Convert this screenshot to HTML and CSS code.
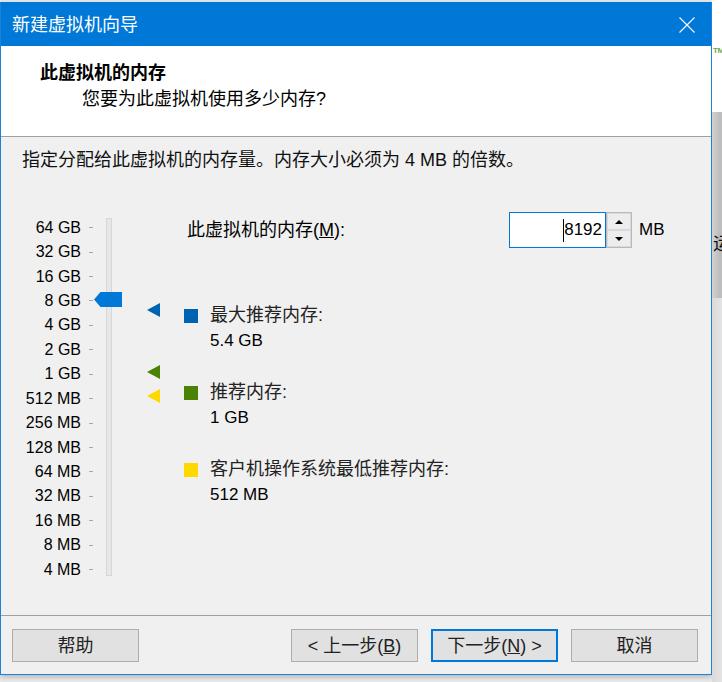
FILE: index.html
```html
<!DOCTYPE html>
<html lang="zh-CN">
<head>
<meta charset="utf-8">
<title>新建虚拟机向导</title>
<link rel="stylesheet" href="styles.css">
</head>
<body>
<div class="screen">
  <div class="window">
    <div class="titlebar">
      <span class="title">新建虚拟机向导</span>
      <svg class="close" width="16" height="16" viewBox="0 0 16 16"><path d="M0.5 0.5 L15.5 15.5 M15.5 0.5 L0.5 15.5" stroke="#fff" stroke-width="1.1" fill="none"/></svg>
    </div>
    <div class="header">
      <div class="h-title">此虚拟机的内存</div>
      <div class="h-sub">您要为此虚拟机使用多少内存?</div>
    </div>
    <div class="body">
      <div class="intro">指定分配给此虚拟机的内存量。内存大小必须为 4 MB 的倍数。</div>
      <div class="main">
        <div class="slider">
          <div class="scale">
            <div class="row"><span class="lbl">64 GB</span><span class="tick"></span></div>
            <div class="row"><span class="lbl">32 GB</span><span class="tick"></span></div>
            <div class="row"><span class="lbl">16 GB</span><span class="tick"></span></div>
            <div class="row"><span class="lbl">8 GB</span><span class="tick"></span></div>
            <div class="row"><span class="lbl">4 GB</span><span class="tick"></span></div>
            <div class="row"><span class="lbl">2 GB</span><span class="tick"></span></div>
            <div class="row"><span class="lbl">1 GB</span><span class="tick"></span></div>
            <div class="row"><span class="lbl">512 MB</span><span class="tick"></span></div>
            <div class="row"><span class="lbl">256 MB</span><span class="tick"></span></div>
            <div class="row"><span class="lbl">128 MB</span><span class="tick"></span></div>
            <div class="row"><span class="lbl">64 MB</span><span class="tick"></span></div>
            <div class="row"><span class="lbl">32 MB</span><span class="tick"></span></div>
            <div class="row"><span class="lbl">16 MB</span><span class="tick"></span></div>
            <div class="row"><span class="lbl">8 MB</span><span class="tick"></span></div>
            <div class="row"><span class="lbl">4 MB</span><span class="tick"></span></div>
          </div>
          <div class="track">
            <svg class="thumb" width="28" height="15" viewBox="0 0 28 15"><path d="M0 7.5 L6.5 0 L28 0 L28 15 L6.5 15 Z" fill="#0078d7"/></svg>
          </div>
          <div class="markers">
            <svg class="mk mk-max" width="13" height="14" viewBox="0 0 13 14"><path d="M0 7 L13 0 L13 14 Z" fill="#0063b1"/></svg>
            <svg class="mk mk-rec" width="13" height="14" viewBox="0 0 13 14"><path d="M0 7 L13 0 L13 14 Z" fill="#498205"/></svg>
            <svg class="mk mk-min" width="13" height="14" viewBox="0 0 13 14"><path d="M0 7 L13 0 L13 14 Z" fill="#ffd800"/></svg>
          </div>
        </div>
        <div class="details">
          <div class="mem-row">
            <span class="mem-label">此虚拟机的内存(<u>M</u>):</span>
            <div class="spin">
              <div class="spin-input"><span class="caret"></span>8192</div>
              <div class="spin-btns">
                <div class="sb"><span class="arr-up"></span></div>
                <div class="sb"><span class="arr-down"></span></div>
              </div>
            </div>
            <span class="unit">MB</span>
          </div>
          <div class="legend">
            <div class="item">
              <span class="sq sq-blue"></span>
              <div class="txt"><div>最大推荐内存:</div><div class="val">5.4 GB</div></div>
            </div>
            <div class="item">
              <span class="sq sq-green"></span>
              <div class="txt"><div>推荐内存:</div><div class="val">1 GB</div></div>
            </div>
            <div class="item">
              <span class="sq sq-yellow"></span>
              <div class="txt"><div>客户机操作系统最低推荐内存:</div><div class="val">512 MB</div></div>
            </div>
          </div>
        </div>
      </div>
    </div>
    <div class="footer">
      <button class="btn">帮助</button>
      <div class="spacer"></div>
      <button class="btn">&lt; 上一步(<u>B</u>)</button>
      <button class="btn btn-default">下一步(<u>N</u>) &gt;</button>
      <button class="btn">取消</button>
    </div>
  </div>
  <div class="desk">
    <div class="desk-top"><span class="tm">TM</span></div>
    <div class="desk-grey"><span class="desk-char">运</span></div>
    <div class="desk-rest"></div>
  </div>
</div>
</body>
</html>
```

FILE: styles.css
```css
* { box-sizing: border-box; }
html, body { margin: 0; padding: 0; }
body {
  background: #ffffff;
  font-family: "Liberation Sans", "Noto Sans CJK SC", sans-serif;
  font-size: 18px;
  color: #000;
}
.screen {
  width: 722px;
  height: 682px;
  display: flex;
  overflow: hidden;
  background: #ececec;
}
.window {
  width: 712px;
  height: 673px;
  margin-top: 2px;
  flex: 0 0 712px;
  display: flex;
  flex-direction: column;
  border: 1px solid #1a82d8;
  border-top: none;
  background: #f0f0f0;
  box-shadow: 0 2px 6px rgba(0,0,0,0.25);
}
.titlebar {
  height: 44px;
  flex: 0 0 44px;
  background: #0078d7;
  display: flex;
  align-items: center;
  justify-content: space-between;
  padding: 0 16px 0 11px;
}
.title {
  color: #fff;
  font-family: "Noto Sans CJK SC", sans-serif;
  font-size: 18px;
  line-height: 24px;
  margin-top: -2px;
}
.close { display: block; margin-top: 2px; }
.header {
  height: 91px;
  flex: 0 0 91px;
  background: #fff;
  border-bottom: 1px solid #a0a0a0;
  padding: 13px 0 0 39px;
}
.h-title {
  font-family: "Noto Sans CJK SC", sans-serif;
  font-weight: bold;
  font-size: 18px;
  line-height: 24px;
}
.h-sub {
  margin: 4px 0 0 42px;
  font-size: 18px;
  line-height: 24px;
}
.body {
  flex: 1 1 auto;
  padding: 11px 0 0 21px;
}
.intro {
  line-height: 24px;
  color: #111;
}
.main {
  margin-top: 40px;
  display: flex;
  align-items: flex-start;
}
.slider {
  display: flex;
  align-items: flex-start;
}
.scale {
  margin-top: 3.5px;
  display: flex;
  flex-direction: column;
}
.row {
  height: 24.43px;
  display: flex;
  align-items: center;
}
.lbl {
  width: 59px;
  text-align: right;
  font-size: 16px;
  line-height: 20px;
  white-space: nowrap;
}
.tick {
  width: 4px;
  height: 1px;
  margin-left: 8px;
  background: #a8a8a8;
}
.track {
  position: relative;
  width: 6px;
  height: 358px;
  margin: 6px 0 0 13px;
  background: #e7e7e7;
  border: 1px solid #d6d6d6;
}
.thumb {
  position: absolute;
  left: -13px;
  top: 73px;
  display: block;
}
.markers {
  position: relative;
  width: 13px;
  height: 370px;
  margin-left: 35px;
}
.mk { position: absolute; left: 0; display: block; }
.mk-max { top: 91px; }
.mk-rec { top: 153px; }
.mk-min { top: 177px; }
.details {
  margin-left: 24px;
  display: flex;
  flex-direction: column;
}
.mem-row {
  height: 36px;
  display: flex;
  align-items: center;
}
.mem-label {
  width: 325px;
  padding-left: 3px;
  line-height: 24px;
  white-space: nowrap;
}
.spin {
  display: flex;
  height: 36px;
}
.spin-input {
  width: 97px;
  height: 36px;
  background: #fff;
  border: 1px solid #0078d7;
  display: flex;
  align-items: center;
  justify-content: flex-end;
  padding-right: 3px;
  font-size: 17px;
}
.caret {
  width: 1px;
  height: 23px;
  background: #000;
}
.spin-btns {
  width: 26px;
  height: 36px;
  border: 1px solid #b9b9b9;
  display: flex;
  flex-direction: column;
  background: #f0f0f0;
}
.sb {
  flex: 1 1 0;
  display: flex;
  align-items: center;
  justify-content: center;
  border: 1px solid #d9d9d9;
  background: #ededed;
}
.arr-up {
  width: 0; height: 0;
  border-left: 4px solid transparent;
  border-right: 4px solid transparent;
  border-bottom: 4px solid #000;
}
.arr-down {
  width: 0; height: 0;
  border-left: 4px solid transparent;
  border-right: 4px solid transparent;
  border-top: 4px solid #000;
}
.unit {
  margin-left: 7px;
  font-size: 17px;
}
.legend {
  margin-top: 54.5px;
  display: flex;
  flex-direction: column;
  gap: 27px;
}
.item {
  display: flex;
  align-items: flex-start;
}
.sq {
  width: 14px;
  height: 14px;
  margin-top: 6.5px;
  flex: 0 0 14px;
}
.sq-blue { background: #0063b1; }
.sq-green { background: #498205; }
.sq-yellow { background: #ffd800; }
.txt {
  margin-left: 12px;
  line-height: 25px;
  color: #222;
}
.val {
  font-size: 17px;
  color: #000;
}
.footer {
  height: 59px;
  flex: 0 0 59px;
  border-top: 1px solid #a0a0a0;
  display: flex;
  align-items: flex-start;
  gap: 13px;
  padding: 13px 13px 0 11px;
}
.spacer { flex: 1 1 auto; }
.btn {
  width: 127px;
  height: 33px;
  background: #e1e1e1;
  border: 1px solid #adadad;
  font-family: "Liberation Sans", "Noto Sans CJK SC", sans-serif;
  font-size: 18px;
  color: #222;
  padding: 0;
  line-height: 24px;
}
.btn-default {
  border: 2px solid #0078d7;
}
.desk {
  flex: 1 1 auto;
  display: flex;
  flex-direction: column;
}
.desk-top {
  height: 112px;
  background: #fff;
  padding-top: 46px;
  font-size: 8px;
  line-height: 10px;
  overflow: hidden;
}
.tm {
  font-size: 8px;
  font-weight: bold;
  color: #6aa84f;
  margin-left: 1px;
  font-family: "Liberation Sans", sans-serif;
  letter-spacing: -0.5px;
}
.desk-grey {
  height: 186px;
  background: linear-gradient(to right, #d2d2d2, #bdbdbd 40%, #c6c6c6);
  padding-top: 118px;
  overflow: hidden;
}
.desk-char {
  display: block;
  margin-left: 1px;
  font-family: "Noto Sans CJK SC", sans-serif;
  font-size: 18px;
  line-height: 24px;
  color: #111;
  white-space: nowrap;
}
.desk-rest {
  flex: 1 1 auto;
  background: linear-gradient(to right, #dadada, #ececec);
}
```
